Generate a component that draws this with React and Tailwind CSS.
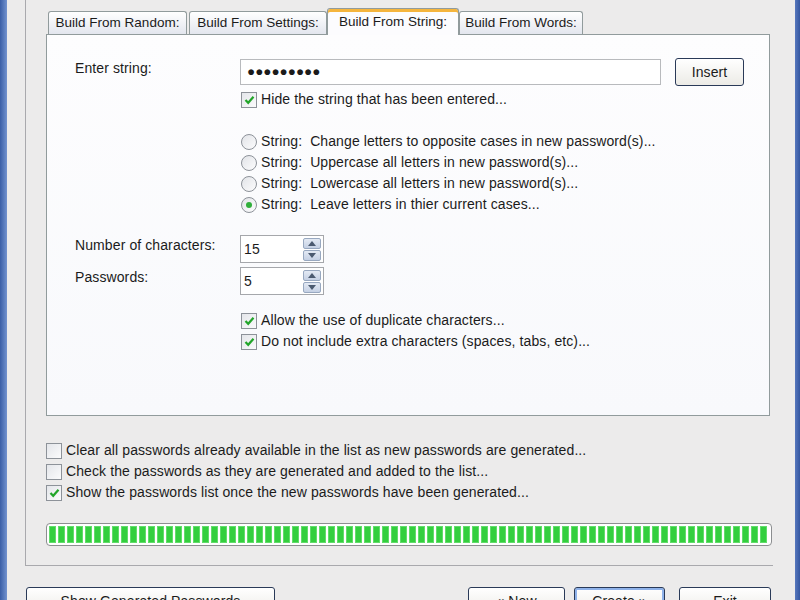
import React from "react";

const font = { fontFamily: '"Liberation Sans", Arial, sans-serif' };

const Check = ({ checked }) => (
  <span className="w-[16px] h-[16px] shrink-0 border border-[#8d9299] bg-gradient-to-br from-[#e4e6ea] to-[#fbfbfc] flex items-center justify-center">
    {checked && (
      <svg width="11" height="10" viewBox="0 0 11 10">
        <path d="M1.5 5 L4.2 7.8 L9.5 1.8" fill="none" stroke="#22a52a" strokeWidth="2.2" />
      </svg>
    )}
  </span>
);

const CheckRow = ({ checked, children }) => (
  <div className="h-[21px] flex items-center gap-[4px]">
    <Check checked={checked} />
    <span>{children}</span>
  </div>
);

const Radio = ({ checked, children }) => (
  <div className="h-[21px] flex items-center gap-[4px]">
    <span className="w-[16px] h-[16px] shrink-0 rounded-full border border-[#8d9299] bg-gradient-to-br from-[#e2e4e8] to-[#fcfcfd] flex items-center justify-center">
      {checked && <span className="w-[6px] h-[6px] rounded-full bg-[#2fae3a]" />}
    </span>
    <span className="whitespace-pre">{children}</span>
  </div>
);

const Spin = ({ value }) => (
  <div className="w-[84px] h-[28px] border border-[#a5a7ab] bg-white flex items-center pl-[3px] pr-[2px]">
    <span className="flex-1">{value}</span>
    <div className="w-[18px] h-[23px] flex flex-col gap-[1px]">
      <div className="flex-1 rounded-[2px] border border-[#98a8c0] bg-gradient-to-b from-[#e4eaf4] to-[#c4d0e4] flex items-center justify-center">
        <svg width="8" height="5" viewBox="0 0 8 5"><path d="M0 5 L4 0 L8 5Z" fill="#4b5a70" /></svg>
      </div>
      <div className="flex-1 rounded-[2px] border border-[#98a8c0] bg-gradient-to-b from-[#e4eaf4] to-[#c4d0e4] flex items-center justify-center">
        <svg width="8" height="5" viewBox="0 0 8 5"><path d="M0 0 L4 5 L8 0Z" fill="#4b5a70" /></svg>
      </div>
    </div>
  </div>
);

const Tab = ({ label, w }) => (
  <div
    className={`${w} h-[23px] mt-[3px] border border-b-0 border-[#919b9c] rounded-t-[3px] bg-gradient-to-b from-[#ffffff] to-[#e3e6ee] flex items-center justify-center`}
  >
    {label}
  </div>
);

const Button = ({ w, focus, children }) => (
  <div
    className={`${w} h-[28px] shrink-0 rounded-[3px] border border-[#2a3a58] bg-gradient-to-b from-[#ffffff] to-[#ecebe6] flex items-center justify-center ${
      focus ? "shadow-[inset_0_0_0_2px_#8fb2ea]" : ""
    }`}
  >
    {children}
  </div>
);

export default function App() {
  const blocks = Array.from({ length: 80 });

  return (
    <div style={font} className="w-[800px] h-[600px] bg-[#ecebeb] flex overflow-hidden text-[14px] tracking-[0.1px] text-[#1b1b1b]">
      <div className="w-[7px] bg-gradient-to-r from-[#3a5ea6] to-[#7393cf]" />

      <div className="flex-1 flex flex-col">
        {/* group frame */}
        <div className="ml-[18px] w-[748px] h-[566px] shrink-0 border-l border-b border-[#a9a9ad] pl-[20px] pt-[7px] flex flex-col">
          {/* tabs */}
          <div className="flex items-end ml-[2px] h-[27px] relative z-10 text-[13.5px] tracking-[0px]">
            <Tab label="Build From Random:" w="w-[139px]" />
            <div className="w-[2px]" />
            <Tab label="Build From Settings:" w="w-[138px]" />
            <div className="w-[132px] h-[27px] border border-b-0 border-[#919b9c] rounded-t-[3px] bg-[#fcfcfe] flex items-center justify-center relative top-[1px] shadow-[inset_0_3px_0_#f5b53d]">
              Build From String:
            </div>
            <Tab label="Build From Words:" w="w-[124px]" />
          </div>

          {/* panel */}
          <div className="w-[724px] h-[382px] shrink-0 border border-[#919b9c] bg-gradient-to-b from-[#fdfdfe] to-[#f8f9fc] pt-[23px] pl-[28px] flex flex-col">
            <div className="flex items-start">
              <div className="w-[165px] leading-[20px]">Enter string:</div>
              <div className="w-[421px] h-[26px] mt-[1px] border border-[#b8babd] bg-white flex items-center pl-[6px] text-[13.5px] tracking-[0px]">
                ●●●●●●●●●
              </div>
              <div className="ml-[14px]">
                <Button w="w-[69px]">Insert</Button>
              </div>
            </div>
            <div className="ml-[166px] mt-[3px]">
              <CheckRow checked>Hide the string that has been entered...</CheckRow>
            </div>

            <div className="ml-[166px] mt-[21px] flex flex-col">
              <Radio>{"String:  Change letters to opposite cases in new password(s)..."}</Radio>
              <Radio>{"String:  Uppercase all letters in new password(s)..."}</Radio>
              <Radio>{"String:  Lowercase all letters in new password(s)..."}</Radio>
              <Radio checked>{"String:  Leave letters in thier current cases..."}</Radio>
            </div>

            <div className="flex mt-[20px]">
              <div className="w-[165px] leading-[20px]">Number of characters:</div>
              <Spin value="15" />
            </div>
            <div className="flex mt-[4px]">
              <div className="w-[165px] leading-[20px]">Passwords:</div>
              <Spin value="5" />
            </div>

            <div className="ml-[166px] mt-[15px] flex flex-col">
              <CheckRow checked>Allow the use of duplicate characters...</CheckRow>
              <CheckRow checked>Do not include extra characters (spaces, tabs, etc)...</CheckRow>
            </div>
          </div>

          {/* options */}
          <div className="mt-[24px] flex flex-col">
            <CheckRow>Clear all passwords already available in the list as new passwords are generated...</CheckRow>
            <CheckRow>Check the passwords as they are generated and added to the list...</CheckRow>
            <CheckRow checked>Show the passwords list once the new passwords have been generated...</CheckRow>
          </div>

          {/* progress */}
          <div className="mt-[20px] w-[726px] h-[23px] rounded-[4px] border border-[#8c8e90] bg-white p-[2px] flex gap-[2px] overflow-hidden">
            {blocks.map((_, i) => (
              <div key={i} className="w-[7px] shrink-0 h-full bg-[#33cf3e] border border-[#62dc6b]" />
            ))}
          </div>
        </div>

        {/* buttons */}
        <div className="flex mt-[21px] ml-[19px]">
          <Button w="w-[249px]">Show Generated Passwords</Button>
          <div className="ml-[193px]">
            <Button w="w-[97px]">« New</Button>
          </div>
          <div className="ml-[9px]">
            <Button w="w-[91px]" focus>Create »</Button>
          </div>
          <div className="ml-[14px]">
            <Button w="w-[92px]">Exit</Button>
          </div>
        </div>
      </div>

      <div className="w-[5px] bg-gradient-to-r from-[#5677bd] to-[#3556a0]" />
    </div>
  );
}
